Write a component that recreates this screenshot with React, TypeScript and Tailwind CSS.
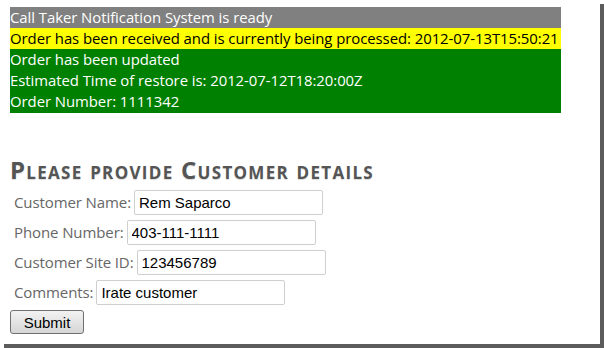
import React from 'react';

const fields = [
  { label: 'Customer Name:', value: 'Rem Saparco' },
  { label: 'Phone Number:', value: '403-111-1111' },
  { label: 'Customer Site ID:', value: '123456789' },
  { label: 'Comments:', value: 'Irate customer' },
];

export default function App() {
  return (
    <div className="w-[604px] h-[348px] bg-white overflow-hidden">
      {/* screenshot frame with drop shadow on right and bottom */}
      <div className="w-[600px] h-[344px] bg-white shadow-[4px_4px_0_#5c5c5c] pl-[10px] pt-[7px] font-['Open_Sans',sans-serif]">
        {/* notification area */}
        <div className="w-[551px] text-[14.9px] leading-[21px] tracking-[-0.05px] whitespace-nowrap">
          <div className="bg-[#808080] text-white">Call Taker Notification System is ready</div>
          <div className="bg-[#ffff00] text-black min-w-full w-max">
            Order has been received and is currently being processed: 2012-07-13T15:50:21
          </div>
          <div className="bg-[#008000] text-white pb-[1px]">
            <div>Order has been updated</div>
            <div>Estimated Time of restore is: 2012-07-12T18:20:00Z</div>
            <div>Order Number: 1111342</div>
          </div>
        </div>

        {/* customer details form */}
        <h2 className="mt-[42px] text-[24px] leading-[30px] font-bold text-[#555555] [font-variant:small-caps] tracking-[1.3px] [text-shadow:0_1px_1px_rgba(0,0,0,0.15)]">
          Please provide Customer details
        </h2>
        <form className="mt-[2px] flex flex-col">
          {fields.map((f) => (
            <div key={f.label} className="h-[30px] flex items-center pl-[4px]">
              <label className="text-[15px] text-[#666666] tracking-[-0.1px]">{f.label}</label>
              <input
                defaultValue={f.value}
                className="ml-[3px] w-[189px] h-[25px] border border-[#cfcfcf] rounded-[2px] px-[4px] text-[15px] text-black font-['Liberation_Sans',Arial,sans-serif] outline-none"
              />
            </div>
          ))}
          <div className="h-[30px] flex items-center">
            <button
              type="button"
              className="w-[74px] h-[24px] border border-[#707070] rounded-[3px] bg-gradient-to-b from-[#f2f2f2] to-[#d6d6d6] text-[15px] text-black font-['Liberation_Sans',Arial,sans-serif] leading-none"
            >
              Submit
            </button>
          </div>
        </form>
      </div>
    </div>
  );
}
